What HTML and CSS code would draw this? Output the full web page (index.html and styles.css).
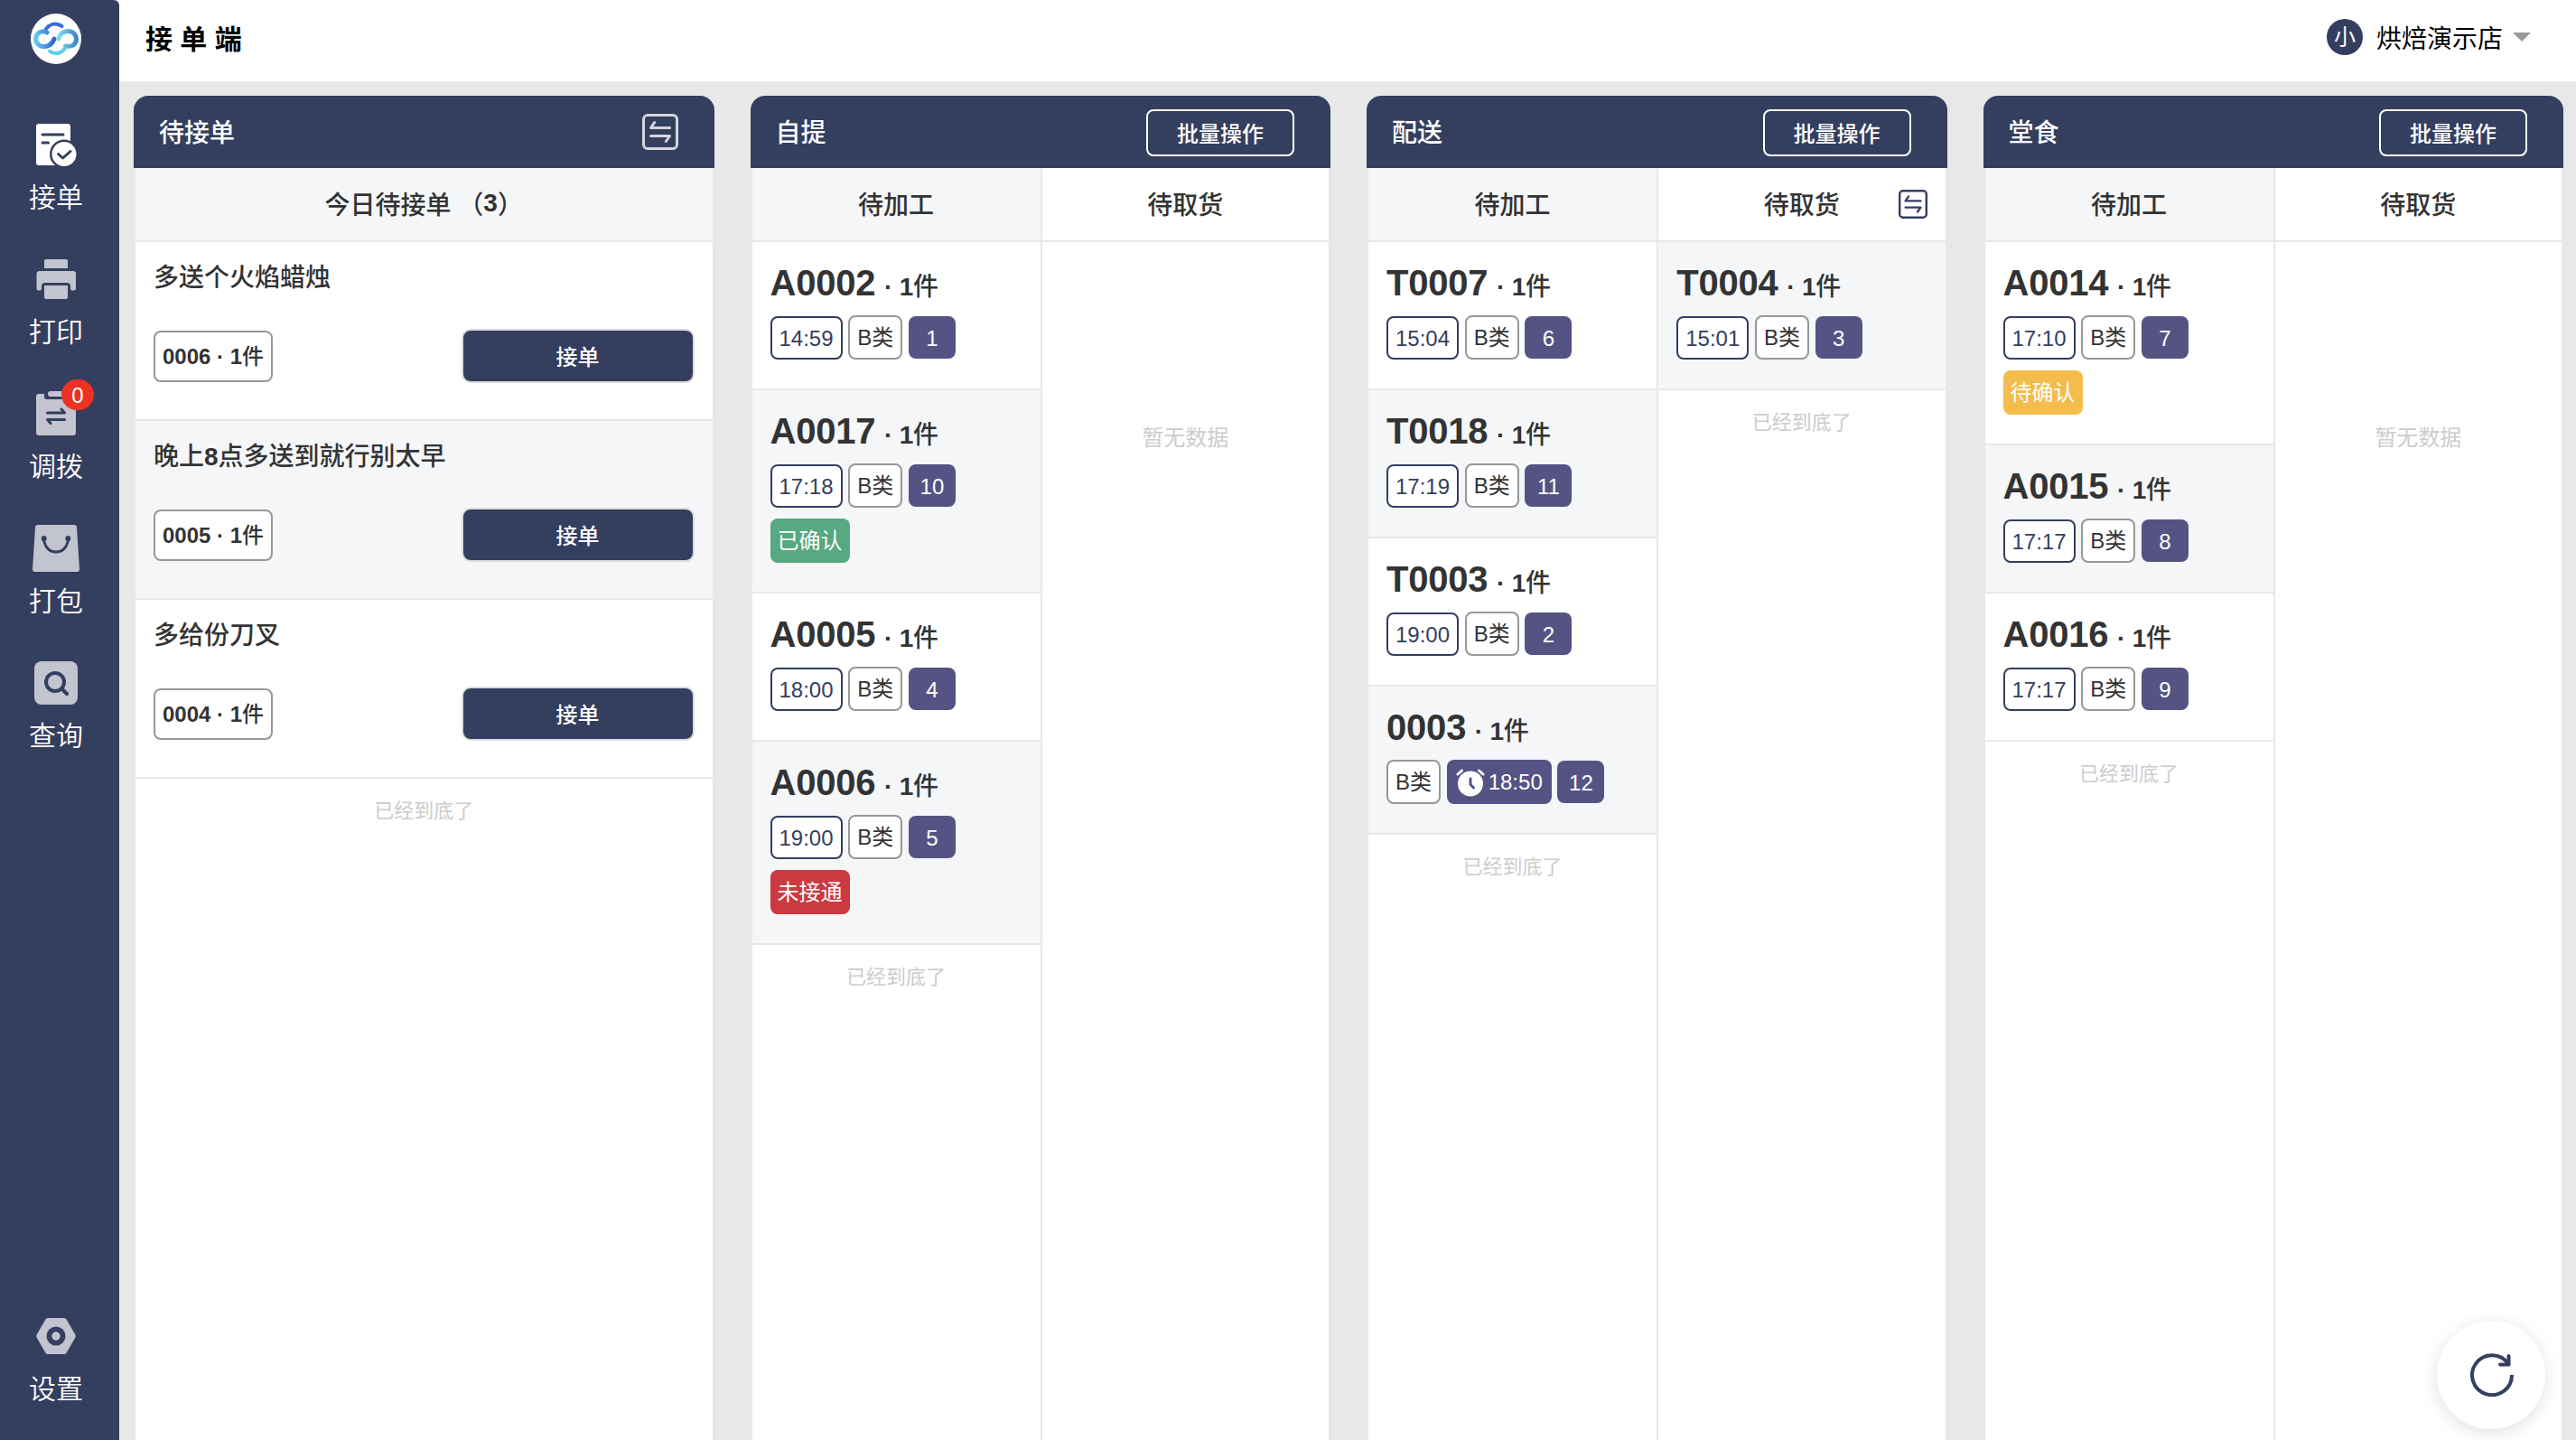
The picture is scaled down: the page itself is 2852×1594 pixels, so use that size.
FILE: index.html
```html
<!DOCTYPE html>
<html lang="zh-CN">
  <head>
    <meta charset="utf-8" />
    <title>接单端</title>
    <link rel="stylesheet" href="styles.css" />
  </head>
  <body>
    <svg width="0" height="0" class="defs">
      <symbol id="icon-swap" viewBox="0 0 40 40">
        <rect x="1.5" y="1.5" width="37" height="37" rx="4.5" />
        <path d="M30.500 15.500H9.500L13.700 9.500M9.500 24.500H30.500L26.300 30.500" />
      </symbol>
    </svg>

    <aside class="sidebar">
      <div class="logo">
        <svg viewBox="0 0 56 56" width="56" height="56">
          <defs>
            <linearGradient id="g1" x1="0" y1="0" x2="1" y2="0">
              <stop offset="0" stop-color="#62c8f6" />
              <stop offset="1" stop-color="#3361cf" />
            </linearGradient>
            <linearGradient id="g2" x1="0" y1="0" x2="1" y2="0">
              <stop offset="0" stop-color="#80dcf0" />
              <stop offset="1" stop-color="#3d86c6" />
            </linearGradient>
          </defs>
          <g fill="none" stroke-width="5" stroke-linecap="round">
            <path d="M17 17C20 12.500 25 10.500 30 12C32 12.500 33.500 13.200 34.500 14" stroke="#3a6bd8" stroke-width="4" />
            <path d="M21 41.500C25 45 33 45.500 38 38.500" stroke="#5fcdec" stroke-width="4" />
            <path d="M18 21C12 17.500 5.500 22 5.500 28C5.500 34 11 37 16 36.500C21 36 24.500 32 26 28" stroke="url(#g1)" />
            <path d="M31 28C32 22.500 36.500 19.500 41.500 19.500C47 19.500 50.500 24 50.500 28.500C50.500 33.500 46 37.500 38.500 36" stroke="url(#g2)" />
          </g>
        </svg>
      </div>
      <nav class="nav">
        <a class="nav-item active">
          <svg viewBox="0 0 56 56">
            <path fill="currentColor" d="M9 5H41a3 3 0 0 1 3 3V40L33 51H9a3 3 0 0 1-3-3V8a3 3 0 0 1 3-3z" />
            <path class="cut" d="M13 17H36M13 26H19.500" />
            <circle cx="37" cy="38.500" r="16" fill="#343e5e" />
            <circle cx="37" cy="38.500" r="13.500" fill="currentColor" />
            <path class="cut" d="M30.500 38.500L35.500 43L44 35.500" />
          </svg>
          <span>接单</span>
        </a>
        <a class="nav-item">
          <svg viewBox="0 0 56 56">
            <g fill="currentColor">
              <path d="M17 6H39a2 2 0 0 1 2 2V16H15V8a2 2 0 0 1 2-2z" />
              <path d="M9 19H47a3 3 0 0 1 3 3V38a2 2 0 0 1-2 2.500H46a2 2 0 0 1-2-2V36a4 4 0 0 0-4-4H16a4 4 0 0 0-4 4v2.500a2 2 0 0 1-2 2H8.500a2 2 0 0 1-2-2V22a3 3 0 0 1 2.500-3z" />
              <path d="M15 35H41V48a2 2 0 0 1-2 2H17a2 2 0 0 1-2-2z" />
            </g>
          </svg>
          <span>打印</span>
        </a>
        <a class="nav-item">
          <svg viewBox="0 0 56 56">
            <path fill="currentColor" d="M9 6H15V9a3 3 0 0 0 3 3H38a3 3 0 0 0 3-3V6H47a3 3 0 0 1 3 3V49a3 3 0 0 1-3 3H9a3 3 0 0 1-3-3V9a3 3 0 0 1 3-3z" />
            <rect x="19" y="3" width="18" height="6" rx="3" fill="currentColor" />
            <path class="cut" d="M18.500 27H37.500L34 23M37.500 34.500H18.500L22 38.500" />
          </svg>
          <span>调拨</span>
          <em class="badge">0</em>
        </a>
        <a class="nav-item">
          <svg viewBox="0 0 56 56">
            <path fill="currentColor" d="M8 2H48a3 3 0 0 1 3 3L54 51a3 3 0 0 1-3 3H5a3 3 0 0 1-3-3L5 5a3 3 0 0 1 3-3z" />
            <path class="cut" d="M14.500 17C15 25 19.500 32 28 32C36.500 32 41 25 41.500 17" />
            <circle cx="14.700" cy="17" r="3" fill="#343e5e" />
            <circle cx="41.300" cy="17" r="3" fill="#343e5e" />
          </svg>
          <span>打包</span>
        </a>
        <a class="nav-item">
          <svg viewBox="0 0 56 56">
            <rect x="4" y="4" width="48" height="48" rx="8" fill="currentColor" />
            <circle class="cut thick" cx="27" cy="27" r="10" />
            <path class="cut thick" d="M34.500 34.500L40 40" />
          </svg>
          <span>查询</span>
        </a>
      </nav>
      <a class="nav-item setting">
        <svg viewBox="0 0 56 56">
          <path fill="currentColor" d="M19 8H37a3 3 0 0 1 2.600 1.500L49.400 26.500a3 3 0 0 1 0 3L39.600 46.500A3 3 0 0 1 37 48H19a3 3 0 0 1-2.600-1.500L6.600 29.500a3 3 0 0 1 0-3L16.400 9.500A3 3 0 0 1 19 8z" />
          <circle cx="28" cy="28" r="10.500" fill="#343e5e" />
          <circle cx="28" cy="28" r="4.700" fill="currentColor" />
        </svg>
        <span>设置</span>
      </a>
    </aside>

    <div class="main">
      <header class="topbar">
        <h1>接 单 端</h1>
        <div class="store">
          <span class="avatar">小</span>
          <span>烘焙演示店</span>
          <i class="caret"></i>
        </div>
      </header>

      <div class="board">
        <section class="panel">
          <div class="panel-head">
            <h2>待接单</h2>
            <svg class="swap"><use href="#icon-swap" /></svg>
          </div>
          <div class="panel-body">
            <div class="lane">
              <div class="lane-head gray">今日待接单 （<b>3</b>）</div>
              <div class="pending">
                <p>多送个火焰蜡烛</p>
                <div class="pending-row"><span class="no"><b>0006 · 1</b>件</span><button>接单</button></div>
              </div>
              <div class="pending gray">
                <p>晚上<b>8</b>点多送到就行别太早</p>
                <div class="pending-row"><span class="no"><b>0005 · 1</b>件</span><button>接单</button></div>
              </div>
              <div class="pending">
                <p>多给份刀叉</p>
                <div class="pending-row"><span class="no"><b>0004 · 1</b>件</span><button>接单</button></div>
              </div>
              <div class="end">已经到底了</div>
            </div>
          </div>
        </section>

        <section class="panel">
          <div class="panel-head">
            <h2>自提</h2>
            <button class="batch">批量操作</button>
          </div>
          <div class="panel-body">
            <div class="lane">
              <div class="lane-head gray">待加工</div>
              <div class="order">
                <h3>A0002<small><b> · 1</b>件</small></h3>
                <div class="tags"><span class="time">14:59</span><span class="type">B类</span><span class="num">1</span></div>
              </div>
              <div class="order gray">
                <h3>A0017<small><b> · 1</b>件</small></h3>
                <div class="tags"><span class="time">17:18</span><span class="type">B类</span><span class="num">10</span></div>
                <div class="tags"><span class="status green">已确认</span></div>
              </div>
              <div class="order">
                <h3>A0005<small><b> · 1</b>件</small></h3>
                <div class="tags"><span class="time">18:00</span><span class="type">B类</span><span class="num">4</span></div>
              </div>
              <div class="order gray">
                <h3>A0006<small><b> · 1</b>件</small></h3>
                <div class="tags"><span class="time">19:00</span><span class="type">B类</span><span class="num">5</span></div>
                <div class="tags"><span class="status red">未接通</span></div>
              </div>
              <div class="end">已经到底了</div>
            </div>
            <div class="lane">
              <div class="lane-head">待取货</div>
              <div class="empty">暂无数据</div>
            </div>
          </div>
        </section>

        <section class="panel">
          <div class="panel-head">
            <h2>配送</h2>
            <button class="batch">批量操作</button>
          </div>
          <div class="panel-body">
            <div class="lane">
              <div class="lane-head gray">待加工</div>
              <div class="order">
                <h3>T0007<small><b> · 1</b>件</small></h3>
                <div class="tags"><span class="time">15:04</span><span class="type">B类</span><span class="num">6</span></div>
              </div>
              <div class="order gray">
                <h3>T0018<small><b> · 1</b>件</small></h3>
                <div class="tags"><span class="time">17:19</span><span class="type">B类</span><span class="num">11</span></div>
              </div>
              <div class="order">
                <h3>T0003<small><b> · 1</b>件</small></h3>
                <div class="tags"><span class="time">19:00</span><span class="type">B类</span><span class="num">2</span></div>
              </div>
              <div class="order gray">
                <h3>0003<small><b> · 1</b>件</small></h3>
                <div class="tags">
                  <span class="type">B类</span>
                  <span class="alarm">
                    <svg viewBox="0 0 32 32">
                      <circle cx="16" cy="17.500" r="14" fill="#fff" />
                      <path d="M2 7L6.500 3M30 7L25.500 3" stroke="#fff" />
                      <path d="M16 12V18.500L19.500 22" stroke="#555384" />
                    </svg>18:50</span>
                  <span class="num">12</span>
                </div>
              </div>
              <div class="end">已经到底了</div>
            </div>
            <div class="lane">
              <div class="lane-head">待取货<svg class="swap small"><use href="#icon-swap" /></svg></div>
              <div class="order gray">
                <h3>T0004<small><b> · 1</b>件</small></h3>
                <div class="tags"><span class="time">15:01</span><span class="type">B类</span><span class="num">3</span></div>
              </div>
              <div class="end">已经到底了</div>
            </div>
          </div>
        </section>

        <section class="panel">
          <div class="panel-head">
            <h2>堂食</h2>
            <button class="batch">批量操作</button>
          </div>
          <div class="panel-body">
            <div class="lane">
              <div class="lane-head gray">待加工</div>
              <div class="order">
                <h3>A0014<small><b> · 1</b>件</small></h3>
                <div class="tags"><span class="time">17:10</span><span class="type">B类</span><span class="num">7</span></div>
                <div class="tags"><span class="status yellow">待确认</span></div>
              </div>
              <div class="order gray">
                <h3>A0015<small><b> · 1</b>件</small></h3>
                <div class="tags"><span class="time">17:17</span><span class="type">B类</span><span class="num">8</span></div>
              </div>
              <div class="order">
                <h3>A0016<small><b> · 1</b>件</small></h3>
                <div class="tags"><span class="time">17:17</span><span class="type">B类</span><span class="num">9</span></div>
              </div>
              <div class="end">已经到底了</div>
            </div>
            <div class="lane">
              <div class="lane-head">待取货</div>
              <div class="empty">暂无数据</div>
            </div>
          </div>
        </section>
      </div>
    </div>

    <div class="refresh">
      <svg viewBox="0 0 48 48" width="48" height="48">
        <path d="M46 24A22 22 0 1 1 42 11.500" />
        <path d="M42.500 3V12.500H33" stroke-linecap="round" stroke-linejoin="round" />
      </svg>
    </div>
  </body>
</html>
```
FILE: styles.css
```css
* {
  box-sizing: border-box;
}
body {
  margin: 0;
  height: 100vh;
  display: flex;
  overflow: hidden;
  background: #fff;
  color: #333;
  font-family: "Liberation Sans", "Noto Sans CJK SC", sans-serif;
}
h1, h2, h3, p {
  margin: 0;
}
button {
  font: inherit;
  padding: 0;
}
b {
  font-weight: 700;
}
.defs {
  position: absolute;
}

/* sidebar */
.sidebar {
  width: 132px;
  flex-shrink: 0;
  padding: 15px 8px 34px 0;
  display: flex;
  flex-direction: column;
  align-items: center;
  background: #343e5e;
  border-top-right-radius: 6px;
}
.logo {
  width: 56px;
  height: 56px;
  border-radius: 50%;
  background: #fff;
}
.nav {
  margin-top: 61px;
  flex: 1;
}
.nav-item {
  position: relative;
  display: flex;
  flex-direction: column;
  align-items: center;
  height: 149px;
  color: #c2c4cf;
}
.nav-item.active {
  color: #fff;
}
.nav-item svg {
  width: 56px;
  height: 56px;
}
.nav-item span {
  margin-top: 9px;
  font-size: 30px;
  font-weight: 350;
  line-height: 44px;
  color: #fff;
}
.nav-item.setting {
  height: 109px;
}
.cut {
  fill: none;
  stroke: #343e5e;
  stroke-width: 3;
  stroke-linecap: round;
  stroke-linejoin: round;
}
.cut.thick {
  stroke-width: 4;
}
.badge {
  position: absolute;
  top: -10px;
  left: 36px;
  width: 36px;
  height: 34px;
  border-radius: 18px;
  background: #ed3223;
  color: #fff;
  font-size: 24px;
  font-style: normal;
  line-height: 35px;
  text-align: center;
}

/* top bar */
.main {
  flex: 1;
  display: flex;
  flex-direction: column;
}
.topbar {
  height: 90px;
  padding: 0 50px 8px 29px;
  display: flex;
  justify-content: space-between;
  align-items: center;
  color: #000;
}
.topbar h1 {
  font-size: 30px;
  font-weight: 700;
}
.store {
  display: flex;
  align-items: center;
  font-size: 28px;
}
.avatar {
  width: 40px;
  height: 40px;
  margin-right: 15px;
  border-radius: 50%;
  background: #343e5e;
  color: #fff;
  font-size: 24px;
  line-height: 40px;
  text-align: center;
}
.caret {
  margin-left: 11px;
  border: 10px solid transparent;
  border-top-color: #999;
  border-bottom: 0;
}

/* board */
.board {
  flex: 1;
  display: flex;
  gap: 40px;
  padding: 16px 14px 0 16px;
  background: #e8e8e8;
}
.panel {
  flex: 1;
  display: flex;
  flex-direction: column;
}
.panel-head {
  height: 80px;
  padding: 0 40px 0 28px;
  display: flex;
  justify-content: space-between;
  align-items: center;
  border-radius: 16px 16px 0 0;
  background: #343e5e;
  color: #fff;
}
.panel-head h2 {
  padding-bottom: 2px;
  font-size: 28px;
  font-weight: 500;
}
.swap {
  width: 40px;
  height: 40px;
  fill: none;
  stroke: #d3d6dd;
  stroke-width: 3;
  stroke-linecap: round;
  stroke-linejoin: round;
}
.swap.small {
  position: absolute;
  right: 20px;
  top: 24px;
  width: 32px;
  height: 32px;
  stroke: #343e5e;
}
.batch {
  width: 164px;
  height: 52px;
  margin-top: 2px;
  padding-bottom: 2px;
  border: 2px solid #fff;
  border-radius: 8px;
  background: none;
  color: #fff;
  font-size: 24px;
  font-weight: 500;
}
.panel-body {
  flex: 1;
  display: flex;
  margin: 0 2px;
  background: #fff;
}
.lane {
  flex: 1;
}
.lane + .lane {
  border-left: 2px solid #e8e8e8;
  flex: 0 0 319.25px;
}
.lane-head {
  position: relative;
  height: 82px;
  padding-bottom: 2px;
  display: flex;
  justify-content: center;
  align-items: center;
  border-bottom: 2px solid #e8e8e8;
  font-size: 28px;
  font-weight: 500;
  white-space: pre;
}
.gray {
  background: #f4f6f8;
}
.pending {
  height: 198px;
  padding: 20px 20px 0;
  border-bottom: 2px solid #e8e8e8;
  font-weight: 500;
}
.pending p {
  font-size: 28px;
  line-height: 40px;
}
.pending-row {
  margin-top: 36px;
  display: flex;
  justify-content: space-between;
  align-items: center;
  font-size: 24px;
}
.pending .no {
  height: 57px;
  padding: 0 8px;
  border: 2px solid #979797;
  border-radius: 8px;
  background: #fff;
  line-height: 53px;
}
.pending button {
  width: 258px;
  height: 60px;
  padding-bottom: 2px;
  border: 2px solid #dcdcdc;
  border-radius: 10px;
  background: #343e5e;
  color: #fff;
}
.order {
  padding: 16px 20px 32px;
  border-bottom: 2px solid #e8e8e8;
}
.order h3 {
  font-size: 40px;
  line-height: 58px;
  height: 65px;
  letter-spacing: -0.2px;
}
.order small {
  margin-left: 2px;
  font-size: 28px;
  font-weight: 500;
}
.tags {
  height: 49px;
  display: flex;
  align-items: flex-start;
  gap: 6.67px;
  font-size: 24px;
}
.tags + .tags {
  margin-top: 12px;
}
.tags span {
  border-radius: 8px;
  text-align: center;
  line-height: 45px;
}
.tags .time {
  height: 48px;
  margin-top: 1px;
  padding: 0 8px;
  border: 2px solid #343e5e;
  background: #fff;
  color: #343e5e;
}
.tags .type {
  height: 49px;
  padding: 0 8px;
  border: 2px solid #979797;
  background: #fff;
}
.tags .num {
  width: 52px;
  height: 47px;
  margin-top: 1px;
  background: #555384;
  color: #fff;
  line-height: 49px;
}
.tags .alarm {
  display: flex;
  align-items: center;
  height: 49px;
  padding: 0 10px;
  background: #555384;
  color: #fff;
}
.alarm svg {
  width: 32px;
  height: 32px;
  margin-right: 4px;
  fill: none;
  stroke-width: 3;
  stroke-linecap: round;
}
.tags .status {
  height: 49px;
  padding: 0 8px;
  color: #fff;
  line-height: 49px;
}
.tags .green {
  background: #56a981;
}
.tags .red {
  background: #cb3a40;
}
.tags .yellow {
  background: #f3bc4d;
}
.end {
  padding-top: 1px;
  font-size: 22px;
  line-height: 70px;
  text-align: center;
  color: #ccc;
}
.empty {
  padding-top: 200px;
  font-size: 24px;
  line-height: 34px;
  text-align: center;
  color: #ccc;
}

.refresh {
  position: fixed;
  right: 34px;
  bottom: 12px;
  width: 120px;
  height: 120px;
  padding-left: 2px;
  display: flex;
  justify-content: center;
  align-items: center;
  border-radius: 50%;
  background: #fff;
  box-shadow: 0 4px 20px rgba(0, 0, 0, 0.12);
}
.refresh svg {
  fill: none;
  stroke: #343e5e;
  stroke-width: 4;
}
```
